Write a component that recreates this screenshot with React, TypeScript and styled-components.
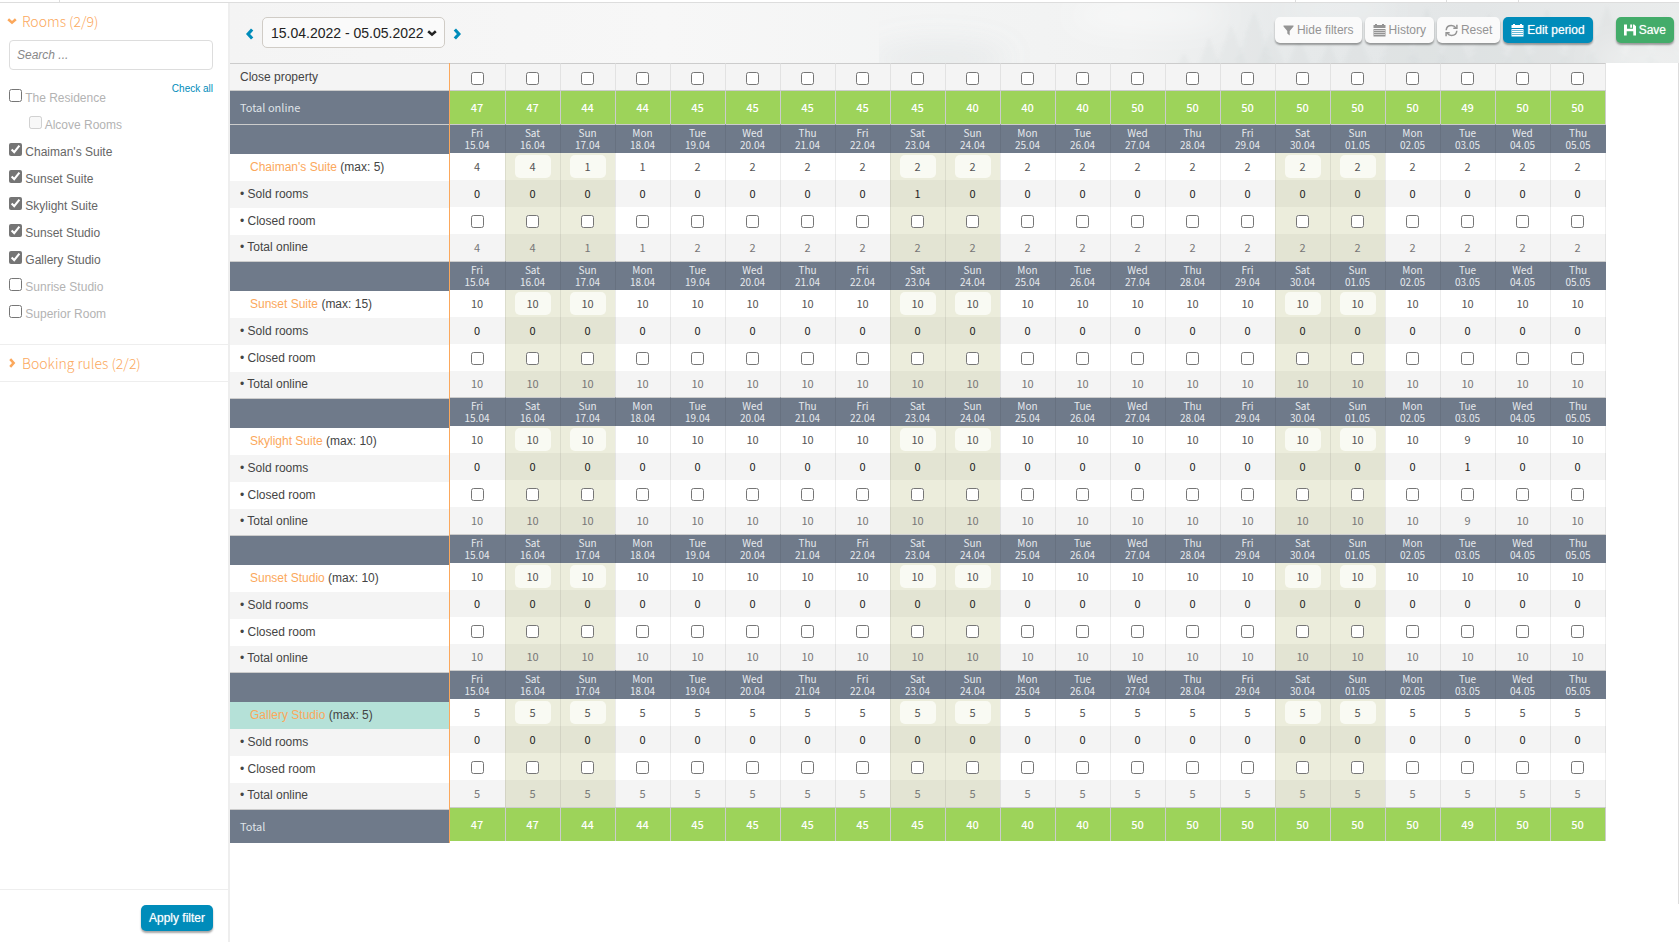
import React, { useState } from "react";
import styled, { createGlobalStyle, css } from "styled-components";

const sans = `"Liberation Sans", Arial, sans-serif`;
const source = `"Source Sans Pro", "Noto Sans CJK SC", "Noto Sans", sans-serif`;
const sourceLight = `"Source Sans Pro Light", "Noto Sans CJK SC Light", "Noto Sans CJK SC", sans-serif`;

const color = {
  slate: "#6f7a8a",
  green: "#9dd35a",
  orange: "#fba85c",
  blue: "#008cba",
  save: "#43ac6a",
  line: "#cccccc",
  faint: "#eeeeee",
  stripe: "#f4f4f4",
  teal: "#b5e1d8",
};

const GlobalStyle = createGlobalStyle`
  * { box-sizing: border-box; }
  body {
    margin: 0;
    background: #fff;
    color: #333;
    font: 12px/18px ${sans};
  }
  button, input { font-family: inherit; }
  input[type="checkbox"] {
    width: 13px;
    height: 13px;
    margin: 0;
    accent-color: #757575;
  }
`;

const Page = styled.div`
  display: flex;
  flex-direction: column;
  min-height: 100vh;
`;

const TabStrip = styled.div`
  display: flex;
  height: 3px;
  border-bottom: 1px solid #ddd;
`;

const TabEdge = styled.span<{ $grow: number }>`
  flex: ${(p) => p.$grow} 1 0;
  border-right: 1px solid #ddd;
  &:last-child { border-right: 0; }
`;

const Columns = styled.div`
  display: flex;
  flex: 1;
`;

const Sidebar = styled.aside`
  display: flex;
  flex: none;
  flex-direction: column;
  width: 230px;
  border-right: 2px solid ${color.faint};
`;

const Section = styled.section`
  border-bottom: 1px solid ${color.faint};
`;

const SectionToggle = styled.button`
  display: flex;
  align-items: center;
  gap: 5px;
  width: 100%;
  height: 36px;
  padding: 0 7px 1px;
  border: 0;
  background: none;
  color: ${color.orange};
  font-family: ${sourceLight};
  font-size: 14px;
  font-weight: 300;
  line-height: 20px;
  cursor: pointer;
`;

const ToggleIcon = styled.span`
  display: flex;
  justify-content: center;
  width: 10px;
`;

const RoomsBody = styled.div`
  display: flex;
  flex-direction: column;
  padding: 1px 15px 16px 9px;
`;

const Search = styled.input`
  width: 100%;
  height: 30px;
  padding: 0 7px;
  border: 1px solid #ddd;
  border-radius: 4px;
  background: #fff;
  color: #333;
  font-size: 12px;
  &::placeholder { color: #888; font-style: italic; opacity: 1; }
`;

const RoomsArea = styled.div`
  display: flex;
  align-items: flex-start;
  justify-content: space-between;
  padding-top: 10px;
`;

const RoomList = styled.ul`
  margin: 0;
  padding: 5px 0 0;
  list-style: none;
`;

const RoomItem = styled.li<{ $nested?: boolean; $on?: boolean }>`
  height: 27px;
  padding-left: ${(p) => (p.$nested ? 20 : 0)}px;
  color: ${(p) => (p.$on ? "#666" : "#b3b3b3")};
  line-height: 27px;
  white-space: nowrap;
  input { vertical-align: baseline; }
`;

const CheckAll = styled.a`
  color: ${color.blue};
  font-size: 10px;
  text-decoration: none;
`;

const SideFooter = styled.footer`
  display: flex;
  justify-content: flex-end;
  margin-top: auto;
  padding: 15px 15px 11px;
  border-top: 1px solid ${color.faint};
`;

type Tone = "plain" | "blue" | "green";

const ActionButton = styled.button<{ $tone: Tone }>`
  display: flex;
  align-items: center;
  gap: 3px;
  height: 26px;
  padding: 0 8px;
  border: 0;
  border-radius: 5px;
  box-shadow: 0 2px 2px rgba(0, 0, 0, 0.35);
  font-size: 12px;
  line-height: 18px;
  white-space: nowrap;
  cursor: pointer;
  ${(p) =>
    p.$tone === "plain"
      ? css`background: #fafafa; color: #949494;`
      : css`
          background: ${p.$tone === "blue" ? color.blue : color.save};
          color: #fff;
          text-shadow: 0 0 1px rgba(255, 255, 255, 0.6);
        `}
  svg { flex: none; }
`;

const Main = styled.main`
  display: flex;
  flex: 1;
  flex-direction: column;
  min-width: 0;
`;

const Toolbar = styled.header`
  position: relative;
  display: flex;
  align-items: flex-start;
  justify-content: space-between;
  height: 60px;
  padding: 14px 5px 0 14px;
  overflow: hidden;
  background: linear-gradient(90deg, #f4f4f4 0, #f7f7f7 30%, #f3f4f4 50%, #f1f2f2 62%, #e6e9ea 74%, #e3e6e7 86%, #eaecec 100%);
`;

const Forest = styled.svg`
  position: absolute;
  top: 0;
  right: 0;
  width: 800px;
  height: 60px;
`;

const Period = styled.div`
  position: relative;
  display: flex;
  align-items: center;
  gap: 6px;
`;

const StepButton = styled.button`
  display: flex;
  padding: 3px 0 0;
  border: 0;
  background: none;
  color: ${color.blue};
  cursor: pointer;
`;

const RangeButton = styled.button`
  display: flex;
  align-items: center;
  gap: 3px;
  height: 31px;
  padding: 0 7px 0 8px;
  border: 1px solid #d0ccc6;
  border-radius: 5px;
  background: #fafafa;
  color: #222;
  font-size: 14px;
  line-height: 20px;
  cursor: pointer;
`;

const Actions = styled.div`
  position: relative;
  display: flex;
  gap: 3px;
`;

const SaveSlot = styled.div`
  padding-left: 20px;
`;

const Sheet = styled.div`
  display: flex;
  align-items: flex-start;
  flex: 1;
  margin: 0 0 38px;
  border-right: 1px solid #ddd;
`;

const LabelTable = styled.table`
  flex: none;
  width: 220px;
  border-spacing: 0;
  border-right: 1px solid ${color.orange};
  color: #444;
  td, th { padding: 0 10px 2px; text-align: left; font-weight: 400; white-space: nowrap; }
`;

const DayTable = styled.table`
  flex: none;
  table-layout: fixed;
  width: 1156px;
  border-spacing: 0;
  font-family: ${source};
  font-size: 11px;
  line-height: 16px;
  td, th { padding: 0 1px 2px 0; text-align: center; border-left: 1px solid rgba(0, 0, 0, 0.07); }
  td:first-child, th:first-child { border-left: 0; }
  td:last-child { border-right: 1px solid rgba(0, 0, 0, 0.07); }
`;

const Col = styled.col<{ $last?: boolean }>`
  width: ${(p) => (p.$last ? 56 : 55)}px;
`;

const Row = styled.tr<{ $striped?: boolean; $active?: boolean }>`
  height: 27px;
  background: ${(p) => (p.$active ? color.teal : p.$striped ? color.stripe : "#fff")};
`;

const CloseRow = styled(Row)`
  && td, && th { padding-bottom: 0; border-top: 1px solid ${color.line}; }
`;

const LastLabelRow = styled(Row)`
  height: 26px;
`;

const DayBody = styled.tbody`
  &:nth-of-type(odd) tr:last-child { height: 26px; }
`;

const TotalLabelRow = styled.tr`
  height: 34px;
  background: ${color.slate};
  color: #dfe3e8;
  font-family: ${source};
  font-size: 11px;
  th { border-top: 1px solid ${color.line}; }
`;

const TotalRow = styled.tr`
  height: 34px;
  background: ${color.green};
  color: #fff;
  font-weight: 500;
  && td { border-color: ${color.line}; border-top: 1px solid ${color.line}; }
`;

const BlankRow = styled.tr`
  height: 30px;
  background: ${color.slate};
  td { border-top: 1px solid ${color.line}; }
`;

const DateRow = styled.tr`
  height: 29px;
  background: ${color.slate};
  color: #e6e9ed;
  font-size: 10px;
  line-height: 12px;
  && th { padding-bottom: 0; border-top: 1px solid ${color.line}; font-weight: 400; }
`;

const DayCell = styled.td<{ $weekend: boolean; $muted?: boolean }>`
  color: ${(p) => (p.$muted ? "#777" : "#222")};
  background: ${(p) => (p.$weekend ? "rgba(155, 160, 70, 0.19)" : "transparent")};
`;

const TickCell = styled(DayCell)`
  && { padding-bottom: 0; }
  input { display: block; margin: 2px auto 0; }
`;

const CountCell = styled(DayCell)`
  && { padding-bottom: 0; }
`;

const CountInput = styled.input<{ $weekend: boolean }>`
  display: block;
  width: 36px;
  height: 23px;
  margin: 0 auto;
  padding: 0 0 2px;
  border: 0;
  border-radius: 5px;
  background: ${(p) => (p.$weekend ? "#f9faf3" : "#fff")};
  color: #555;
  font-size: 11px;
  text-align: center;
`;

const RoomLabel = styled.th`
  && { padding-left: 20px; }
`;

const RoomLink = styled.a`
  color: ${color.orange};
  text-decoration: none;
`;

function Chevron({ turn = 0, width = 10 }: { turn?: number; width?: number }) {
  return (
    <svg width={width} height={width} viewBox="0 0 10 10" aria-hidden="true">
      <path
        d="M1.2 3.2 5 6.6 8.800 3.2"
        fill="none"
        stroke="currentColor"
        strokeWidth="2.6"
        transform={`rotate(${turn} 5 5)`}
      />
    </svg>
  );
}

const FilterIcon = () => (
  <svg width="11" height="12" viewBox="0 0 11 12" aria-hidden="true">
    <path d="M.5 1.500h10v1L6.700 7v4.500L4.300 9.500V7L.5 2.500z" fill="currentColor" />
  </svg>
);

const CalendarIcon = ({ grid }: { grid: string }) => (
  <svg width="13" height="13" viewBox="0 0 13 13" aria-hidden="true">
    <path d="M.5 1h1.500V0h2v1h5V0h2v1h1.500v3H.5z" fill="currentColor" />
    <path d="M.5 5h12v7.500H.5z" fill="currentColor" />
    <path d="M1 6.500h11M1 8.500h11M1 10.500h11" stroke={grid} strokeWidth=".6" />
  </svg>
);

const ResetIcon = () => (
  <svg width="13" height="13" viewBox="0 0 13 13" fill="none" stroke="currentColor" strokeWidth="1.5" aria-hidden="true">
    <path d="M1.200 6.200C1.400 3.200 3.800 1.600 6.500 1.600c1.900 0 3.300.8 4.400 2.300" />
    <path d="M11.800 6.800c-.2 3-2.600 4.600-5.300 4.600-1.900 0-3.300-.8-4.400-2.300" />
    <path d="M11.900.7v3.600H8.300M1.100 12.300V8.700h3.600" />
  </svg>
);

const DiskIcon = () => (
  <svg width="12" height="12" viewBox="0 0 12 12" aria-hidden="true">
    <path
      fillRule="evenodd"
      d="M0 .5h3v4.200h6V.5h1.200L12 2.300v9.200H9.300V7.200H2.700v4.300H0zM6.200.5h1.900v3.200H6.200z"
      fill="currentColor"
    />
  </svg>
);

/* One conifer silhouette: tip at (x, top), tiers widening towards the base. */
function conifer(x: number, top: number, half: number) {
  const tiers = 7;
  const step = (66 - top) / tiers;
  const left: string[] = [];
  const right: string[] = [];
  for (let i = 1; i <= tiers; i++) {
    const w = (half * i) / tiers;
    const y = top + step * i;
    right.push(`${x + w} ${y} ${x + w * 0.6} ${y - 2}`);
    left.unshift(`${x - w * 0.6} ${y - 2} ${x - w} ${y}`);
  }
  return `M${x} ${top} L${right.join(" ")} L${left.join(" ")}Z`;
}

const trees = [
  [305, 50, 10], [330, 34, 14], [352, 22, 20], [375, 8, 24], [392, 28, 18],
  [420, 34, 16], [450, 40, 14], [478, 30, 20], [520, 14, 26], [548, 4, 24],
  [575, 26, 22], [610, 10, 26], [640, 32, 20], [668, 6, 26], [700, 18, 24],
  [728, 2, 26], [760, 22, 22], [786, 10, 24],
];

const ForestScene = () => (
  <Forest viewBox="0 0 800 60" aria-hidden="true">
    <defs>
      <filter id="mist" x="-5%" y="-20%" width="110%" height="140%">
        <feGaussianBlur stdDeviation="1.5" />
      </filter>
      <filter id="fog" x="-20%" y="-60%" width="140%" height="220%">
        <feGaussianBlur stdDeviation="14" />
      </filter>
    </defs>
    <g filter="url(#mist)" fill="#9aa8ac" fillOpacity="0.07">
      {trees.map(([x, top, half]) => (
        <path key={x} d={conifer(x, top, half)} />
      ))}
    </g>
    <g filter="url(#fog)">
      <ellipse cx="60" cy="56" rx="70" ry="18" fill="#9aa8ac" fillOpacity="0.12" />
      <ellipse cx="270" cy="12" rx="80" ry="16" fill="#fff" fillOpacity="0.45" />
      <ellipse cx="460" cy="6" rx="60" ry="12" fill="#fff" fillOpacity="0.3" />
      <ellipse cx="770" cy="56" rx="60" ry="14" fill="#fff" fillOpacity="0.45" />
    </g>
  </Forest>
);

const filterRooms = [
  { name: "The Residence", on: false },
  { name: "Alcove Rooms", on: false, nested: true },
  { name: "Chaiman's Suite", on: true },
  { name: "Sunset Suite", on: true },
  { name: "Skylight Suite", on: true },
  { name: "Sunset Studio", on: true },
  { name: "Gallery Studio", on: true },
  { name: "Sunrise Studio", on: false },
  { name: "Superior Room", on: false },
];

const weekdays = ["Fri", "Sat", "Sun", "Mon", "Tue", "Wed", "Thu"];
const days = Array.from({ length: 21 }, (_, i) => {
  const date = i < 16 ? `${15 + i}.04` : `0${i - 15}.05`;
  const name = weekdays[i % 7];
  return { name, date, weekend: name === "Sat" || name === "Sun" };
});

const fill = (value: number, changes: Record<number, number> = {}) =>
  days.map((_, i) => changes[i] ?? value);

const totals = [47, 47, 44, 44, 45, 45, 45, 45, 45, 40, 40, 40, 50, 50, 50, 50, 50, 50, 49, 50, 50];

const suites = [
  { name: "Chaiman's Suite", max: 5, free: fill(2, { 0: 4, 1: 4, 2: 1, 3: 1 }), sold: fill(0, { 8: 1 }) },
  { name: "Sunset Suite", max: 15, free: fill(10), sold: fill(0) },
  { name: "Skylight Suite", max: 10, free: fill(10, { 18: 9 }), sold: fill(0, { 18: 1 }) },
  { name: "Sunset Studio", max: 10, free: fill(10), sold: fill(0) },
  { name: "Gallery Studio", max: 5, free: fill(5), sold: fill(0), active: true },
];

function Totals() {
  return (
    <TotalRow>
      {totals.map((value, i) => (
        <td key={i}>{value}</td>
      ))}
    </TotalRow>
  );
}

function SuiteDays({ suite }: { suite: (typeof suites)[number] }) {
  return (
    <DayBody>
      <DateRow>
        {days.map((d) => (
          <th key={d.date} scope="col">
            {d.name}
            <br />
            {d.date}
          </th>
        ))}
      </DateRow>
      <Row>
        {days.map((d, i) => (
          <CountCell key={d.date} $weekend={d.weekend}>
            <CountInput
              type="text"
              $weekend={d.weekend}
              defaultValue={suite.free[i]}
              aria-label={`${suite.name} ${d.date}`}
            />
          </CountCell>
        ))}
      </Row>
      <Row $striped>
        {days.map((d, i) => (
          <DayCell key={d.date} $weekend={d.weekend}>
            {suite.sold[i]}
          </DayCell>
        ))}
      </Row>
      <Row>
        {days.map((d) => (
          <TickCell key={d.date} $weekend={d.weekend}>
            <input type="checkbox" aria-label={`Close ${suite.name} ${d.date}`} />
          </TickCell>
        ))}
      </Row>
      <Row $striped>
        {days.map((d, i) => (
          <DayCell key={d.date} $weekend={d.weekend} $muted>
            {suite.free[i]}
          </DayCell>
        ))}
      </Row>
    </DayBody>
  );
}

export default function App() {
  const [checked, setChecked] = useState(() => filterRooms.map((r) => r.on));
  const toggle = (i: number) => setChecked((c) => c.map((v, n) => (n === i ? !v : v)));

  return (
    <Page>
      <GlobalStyle />
      <TabStrip>
        <TabEdge $grow={59} />
        <TabEdge $grow={1238} />
        <TabEdge $grow={150} />
        <TabEdge $grow={72} />
        <TabEdge $grow={160} />
      </TabStrip>
      <Columns>
        <Sidebar>
          <Section>
            <SectionToggle type="button" aria-expanded="true">
              <ToggleIcon><Chevron /></ToggleIcon>
              Rooms (2/9)
            </SectionToggle>
            <RoomsBody>
              <Search type="text" placeholder="Search ..." aria-label="Search rooms" />
              <RoomsArea>
                <RoomList>
                  {filterRooms.map((room, i) => (
                    <RoomItem key={room.name} $nested={room.nested} $on={room.on}>
                      <label>
                        <input
                          type="checkbox"
                          checked={checked[i]}
                          disabled={room.nested}
                          onChange={() => toggle(i)}
                        />{" "}
                        {room.name}
                      </label>
                    </RoomItem>
                  ))}
                </RoomList>
                <CheckAll href="#all">Check all</CheckAll>
              </RoomsArea>
            </RoomsBody>
          </Section>
          <Section>
            <SectionToggle type="button" aria-expanded="false">
              <ToggleIcon><Chevron turn={-90} /></ToggleIcon>
              Booking rules (2/2)
            </SectionToggle>
          </Section>
          <SideFooter>
            <ActionButton type="button" $tone="blue">Apply filter</ActionButton>
          </SideFooter>
        </Sidebar>

        <Main>
          <Toolbar>
            <ForestScene />
            <Period>
              <StepButton type="button" aria-label="Previous period">
                <Chevron turn={90} width={12} />
              </StepButton>
              <RangeButton type="button">
                15.04.2022 - 05.05.2022
                <Chevron />
              </RangeButton>
              <StepButton type="button" aria-label="Next period">
                <Chevron turn={-90} width={12} />
              </StepButton>
            </Period>
            <Actions>
              <ActionButton type="button" $tone="plain"><FilterIcon />Hide filters</ActionButton>
              <ActionButton type="button" $tone="plain"><CalendarIcon grid="#fafafa" />History</ActionButton>
              <ActionButton type="button" $tone="plain"><ResetIcon />Reset</ActionButton>
              <ActionButton type="button" $tone="blue"><CalendarIcon grid={color.blue} />Edit period</ActionButton>
              <SaveSlot>
                <ActionButton type="button" $tone="green"><DiskIcon />Save</ActionButton>
              </SaveSlot>
            </Actions>
          </Toolbar>

          <Sheet>
            <LabelTable>
              <tbody>
                <CloseRow $striped><th scope="row">Close property</th></CloseRow>
                <TotalLabelRow><th scope="row">Total online</th></TotalLabelRow>
              </tbody>
              {suites.map((s) => (
                <tbody key={s.name}>
                  <BlankRow><td /></BlankRow>
                  <Row $active={s.active}>
                    <RoomLabel scope="row">
                      <RoomLink href="#room">{s.name}</RoomLink> (max: {s.max})
                    </RoomLabel>
                  </Row>
                  <Row $striped><th scope="row">• Sold rooms</th></Row>
                  <Row><th scope="row">• Closed room</th></Row>
                  <LastLabelRow $striped><th scope="row">• Total online</th></LastLabelRow>
                </tbody>
              ))}
              <tbody>
                <TotalLabelRow><th scope="row">Total</th></TotalLabelRow>
              </tbody>
            </LabelTable>

            <DayTable>
              <colgroup>
                {days.map((d, i) => (
                  <Col key={d.date} $last={i === days.length - 1} />
                ))}
              </colgroup>
              <tbody>
                <CloseRow $striped>
                  {days.map((d) => (
                    <TickCell key={d.date} $weekend={false}>
                      <input type="checkbox" aria-label={`Close property ${d.date}`} />
                    </TickCell>
                  ))}
                </CloseRow>
                <Totals />
              </tbody>
              {suites.map((s) => (
                <SuiteDays key={s.name} suite={s} />
              ))}
              <tbody>
                <Totals />
              </tbody>
            </DayTable>
          </Sheet>
        </Main>
      </Columns>
    </Page>
  );
}
